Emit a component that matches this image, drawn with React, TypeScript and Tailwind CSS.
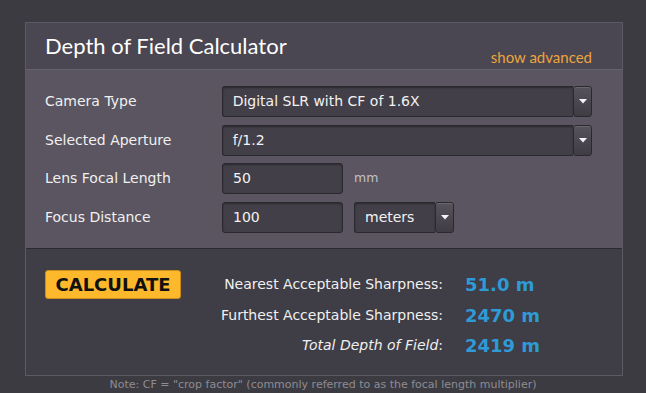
const sans = "font-['DejaVu_Sans',Verdana,sans-serif]";

function Arrow() {
  return (
    <svg width="8" height="5" viewBox="0 0 8 5" className="block">
      <path d="M0 0 L8 0 L4 4.5 Z" fill="#f4f4f4" />
    </svg>
  );
}

function SelectBox({ value, width }: { value: string; width: string }) {
  return (
    <div className={`flex h-[31px] ${width}`}>
      <div className="flex flex-1 items-center rounded-l-[3px] border border-[#2b2930] border-r-0 bg-[#423f48] pl-[10px] text-[14px] text-[#f2f2f2] shadow-[inset_0_1px_2px_rgba(0,0,0,0.35)]">
        {value}
      </div>
      <div className="flex w-[19px] items-center justify-center rounded-[3px] border border-[#2b2930] bg-gradient-to-b from-[#56535c] to-[#3f3c44] shadow-[inset_0_1px_0_rgba(255,255,255,0.12)]">
        <Arrow />
      </div>
    </div>
  );
}

function InputBox({ value }: { value: string }) {
  return (
    <div className="flex h-[31px] w-[121px] items-center rounded-[3px] border border-[#2b2930] bg-[#423f48] pl-[10px] text-[14px] text-[#f2f2f2] shadow-[inset_0_1px_2px_rgba(0,0,0,0.35)]">
      {value}
    </div>
  );
}

function Row({ label, children }: { label: string; children: React.ReactNode }) {
  return (
    <div className="flex items-center">
      <div className="w-[177px] text-[14px] text-[#f0f0f0]">{label}</div>
      {children}
    </div>
  );
}

function Result({ label, value }: { label: React.ReactNode; value: string }) {
  return (
    <div className="flex h-[30.5px] items-center">
      <div className="w-[250px] text-right text-[14px] text-[#f0f0f0]">{label}</div>
      <div className="ml-[22px] text-[18px] font-bold text-[#2e9ad6]">{value}</div>
    </div>
  );
}

export default function App() {
  return (
    <div className={`h-[393px] w-[646px] overflow-hidden bg-[#3c3b42] pt-[22px] ${sans}`}>
      <div className="ml-[25px] w-[598px] border border-[#5d5a64] bg-[#4a4652]">
        {/* Header */}
        <div className="relative h-[47px] border-b border-[#64606b]">
          <div className="pl-[19px] pt-[10px] font-['Lato',sans-serif] text-[22px] leading-[26px] text-white">
            Depth of Field Calculator
          </div>
          <div className="absolute right-[30px] bottom-[1px] font-['Lato',sans-serif] text-[15px] text-[#eda43c]">
            show advanced
          </div>
        </div>

        {/* Form */}
        <div className="flex flex-col gap-[7.5px] border-b border-[#2c2a31] bg-[#5a5560] pt-[16px] pr-[30px] pb-[15px] pl-[19px]">
          <Row label="Camera Type">
            <SelectBox value="Digital SLR with CF of 1.6X" width="w-[371px]" />
          </Row>
          <Row label="Selected Aperture">
            <SelectBox value="f/1.2" width="w-[371px]" />
          </Row>
          <Row label="Lens Focal Length">
            <InputBox value="50" />
            <span className="ml-[11px] text-[12.5px] text-[#c4c0c8]">mm</span>
          </Row>
          <Row label="Focus Distance">
            <InputBox value="100" />
            <div className="ml-[11px]">
              <SelectBox value="meters" width="w-[100px]" />
            </div>
          </Row>
        </div>

        {/* Results */}
        <div className="flex h-[126px] bg-[#3f3d45] pt-[21px] pl-[19px]">
          <div className="h-[29px] w-[136px] rounded-[3px] border border-[#c8901a] bg-[#fdb92b] text-center text-[18px] font-bold leading-[27px] text-[#111]">
            CALCULATE
          </div>
          <div className="ml-[12px] flex flex-col">
            <Result label="Nearest Acceptable Sharpness:" value="51.0 m" />
            <Result label="Furthest Acceptable Sharpness:" value="2470 m" />
            <Result
              label={
                <>
                  <i>Total Depth of Field</i>:
                </>
              }
              value="2419 m"
            />
          </div>
        </div>
      </div>
      <div className="mt-[1px] text-center text-[11px] text-[#8e8c93]">
        Note: CF = "crop factor" (commonly referred to as the focal length multiplier)
      </div>
    </div>
  );
}
